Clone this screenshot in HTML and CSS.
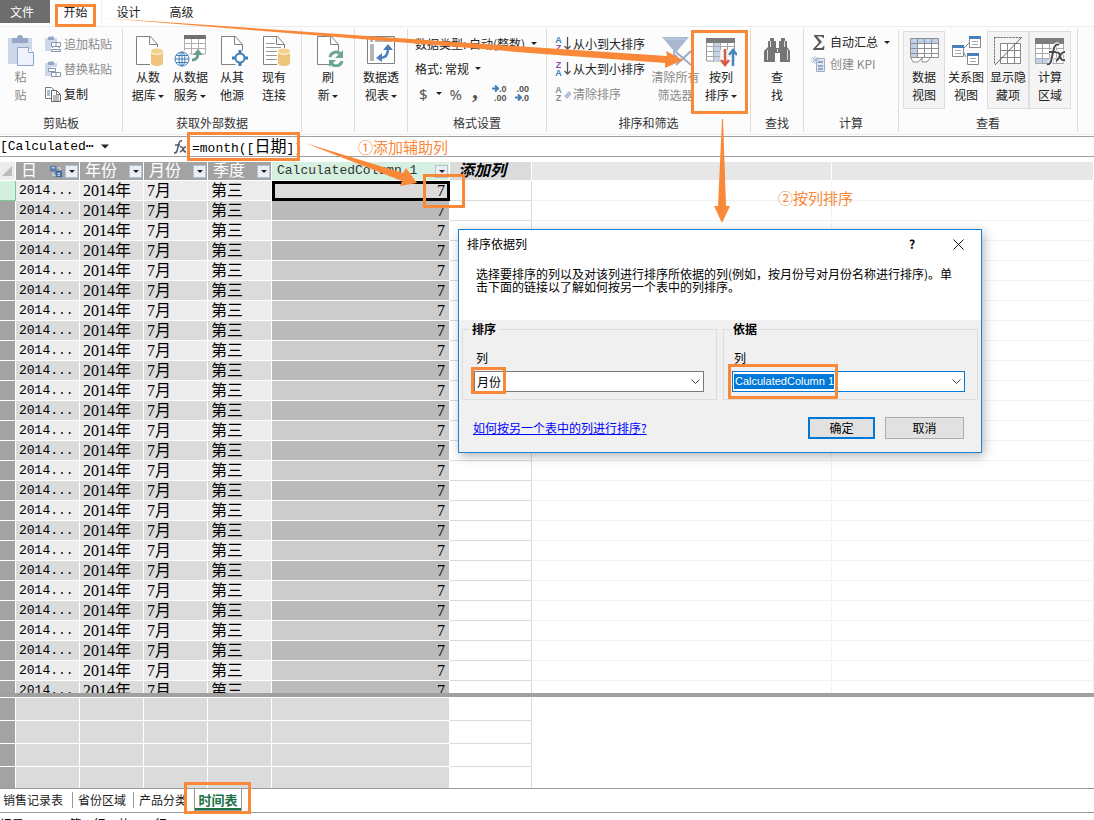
FILE: index.html
```html
<!DOCTYPE html>
<html lang="zh-CN">
<head>
<meta charset="utf-8">
<title>Power Pivot</title>
<link rel="stylesheet" href="styles.css">
</head>
<body>
<svg class="defs" aria-hidden="true">
  <defs>
    <symbol id="caret" viewBox="0 0 6 3"><path d="M0 0h6L3 3z" fill="#222"/></symbol>
    <symbol id="page" viewBox="0 0 32 32"><path d="M4.500 1.500h14l7 8v20h-21z" fill="#fff" stroke="#808080"/><path d="M17.500 1.500v8h8" fill="none" stroke="#808080"/></symbol>
    <symbol id="cyl" viewBox="0 0 12 18"><path d="M0 3v12c0 4 12 4 12 0V3z" fill="#eec57b"/><ellipse cx="6" cy="3" rx="6" ry="2.500" fill="#f4d18f"/><path d="M0 4c1 3 11 3 12 0" fill="none" stroke="#fff"/></symbol>
    <symbol id="sortarrow" viewBox="0 0 6 13"><path d="M3 0v12M0 9l3 3 3-3" fill="none" stroke="#555" stroke-width="1.300"/></symbol>
  </defs>
</svg>
<div class="app">
  <nav class="tabs">
    <button class="tab file">文件</button>
    <button class="tab active">开始</button>
    <button class="tab">设计</button>
    <button class="tab">高级</button>
  </nav>

  <div class="ribbon">
    <section class="group">
      <div class="tools">
        <button class="big paste off">
          <svg class="ico" viewBox="0 0 32 32"><path d="M3 3h24v26H3z" fill="#cdd7ea"/><path d="M7 3h5a3 3 0 016 0h5v5H7z" fill="#97a6c6"/><path d="M12.500 12.500h11l5 5v13h-16z" fill="#eef3fd" stroke="#8fa2c8"/><path d="M23.500 12.500v5h5" fill="#fff" stroke="#8fa2c8"/></svg>
          <span>粘<br>贴</span>
        </button>
        <div class="stack">
          <button class="small off"><svg viewBox="0 0 16 16"><path d="M0 2h4V0h5v2h3v4H6v9H0z" fill="#cdd7ea"/><path d="M3 1h6v3H3z" fill="#97a6c6"/><path d="M6.500 6.500h9v4h-9zM6.500 13.500h9v2h-9zM11 6v4" fill="#fff" stroke="#8794b0"/><path d="M7 12l2-2M15 12l-3-2" stroke="#8794b0"/></svg>追加粘贴</button>
          <button class="small off"><svg viewBox="0 0 16 16"><path d="M0 2h4V0h5v2h3v4H6v9H0z" fill="#cdd7ea"/><path d="M3 1h6v3H3z" fill="#97a6c6"/><path d="M3.500 7.500h7v3h-7zM6.500 11.500h9v4h-9zM11 11v4" fill="#fff" stroke="#8794b0"/></svg>替换粘贴</button>
          <button class="small"><svg viewBox="0 0 16 16"><path d="M.5 1.500h6l3 3v8h-9z" fill="#fff" stroke="#777"/><path d="M2 5h3M2 7h3M2 9h3" stroke="#5079a8"/><path d="M6.500 4.500h5l4 4v7h-9z" fill="#fff" stroke="#666"/><path d="M11.500 4.500v4h4M8 10h6M8 12h6M8 14h6" fill="none" stroke="#777"/></svg>复制</button>
        </div>
      </div>
      <h2>剪贴板</h2>
    </section>

    <section class="group">
      <div class="tools pad4">
        <button class="big">
          <svg class="ico" viewBox="0 0 32 32"><use href="#page" x="0" y="0" width="32" height="32"/><path d="M18 12h14v18H18z" fill="#fcfcfc"/><use href="#cyl" x="19" y="13" width="12" height="18"/></svg>
          <span>从数<br>据库 <svg class="caret"><use href="#caret"/></svg></span>
        </button>
        <button class="big">
          <svg class="ico" viewBox="0 0 32 32"><path d="M10.500 4v15h21V4M17.500 4v15M24.500 4v15M10 8.500h22M10 13.500h22" fill="#fff" stroke="#b0b0b0"/><path d="M10 0h22v4H10z" fill="#707070"/><circle cx="8" cy="24" r="9" fill="#fcfcfc"/><g fill="none" stroke="#3f7fba"><circle cx="8" cy="24" r="7"/><ellipse cx="8" cy="24" rx="3" ry="7"/><path d="M1 24h14M8 17v14M2 20.500h12M2 27.500h12"/></g><path d="M18 25q7 0 7-7" fill="none" stroke="#fff" stroke-width="5"/><path d="M18 25q6 0 6-7" fill="none" stroke="#6b9e8b" stroke-width="3"/><path d="M19 20l5-6 5 6z" fill="#6b9e8b"/></svg>
          <span>从数据<br>服务 <svg class="caret"><use href="#caret"/></svg></span>
        </button>
        <button class="big">
          <svg class="ico" viewBox="0 0 32 32"><use href="#page" width="32" height="32" x="1"/><circle cx="24" cy="23" r="8" fill="#fcfcfc"/><path d="M24 15v16M16 23h16" stroke="#3f7fba" stroke-width="3"/><circle cx="24" cy="23" r="4.500" fill="#fff" stroke="#3f7fba" stroke-width="2"/></svg>
          <span>从其<br>他源</span>
        </button>
        <button class="big">
          <svg class="ico" viewBox="0 0 32 32"><use href="#page" width="32" height="32" x="1"/><path d="M8 8.500h9M8 12.500h15M8 16.500h15M8 20.500h12M8 24.500h12" stroke="#999"/><path d="M19 13h13v18H19z" fill="#fcfcfc"/><use href="#cyl" x="20" y="13" width="12" height="18"/></svg>
          <span>现有<br>连接</span>
        </button>
      </div>
      <h2>获取外部数据</h2>
    </section>

    <section class="group">
      <div class="tools center">
        <button class="big">
          <svg class="ico" viewBox="0 0 32 32"><use href="#page" width="32" height="32" x="1"/><circle cx="24" cy="24" r="8" fill="#fcfcfc"/><path d="M18 22a6 6 0 0111-2M30 26a6 6 0 01-11 2" fill="none" stroke="#6fa68f" stroke-width="3"/><path d="M31 15v8h-8zM17 32v-7h7z" fill="#6fa68f"/></svg>
          <span>刷<br>新 <svg class="caret"><use href="#caret"/></svg></span>
        </button>
      </div>
    </section>

    <section class="group">
      <div class="tools center">
        <button class="big">
          <svg class="ico" viewBox="0 0 32 32"><path d="M2.500 1.500h27v27h-27z" fill="#fff" stroke="#808080"/><path d="M5 4h3v3H5zM10 4h17v3H10zM5 9h4v17H5z" fill="#b5b5b5"/><path d="M15 23q8 0 8-9" fill="none" stroke="#4a7fba" stroke-width="2.500"/><path d="M18 15l5-6 5 6zM17 18v9l-6-4z" fill="#4a7fba"/></svg>
          <span>数据透<br>视表 <svg class="caret"><use href="#caret"/></svg></span>
        </button>
      </div>
    </section>

    <section class="group">
      <div class="tools">
        <div class="stack format">
          <button class="small">数据类型: 自动(整数) <svg class="caret"><use href="#caret"/></svg></button>
          <button class="small">格式: 常规 <svg class="caret"><use href="#caret"/></svg></button>
          <div class="numfmt">
            <button>$</button><svg class="caret"><use href="#caret"/></svg><button>%</button><button class="comma">,</button>
            <button class="dec" aria-label="增加小数位数"><span><svg viewBox="0 0 7 7"><path d="M0 3.500h6M3 .5l3 3-3 3" fill="none" stroke="#3f7fba" stroke-width="2"/></svg>.0</span><span>.00</span></button>
            <button class="dec" aria-label="减少小数位数"><span>.00</span><span><svg viewBox="0 0 7 7"><path d="M0 3.500h6M3 .5l3 3-3 3" fill="none" stroke="#3f7fba" stroke-width="2"/></svg>.0</span></button>
          </div>
        </div>
      </div>
      <h2>格式设置</h2>
    </section>

    <section class="group">
      <div class="tools">
        <div class="stack sort">
          <button class="small"><span class="az"><b class="blue">A</b><b class="violet">Z</b></span><svg class="sarrow"><use href="#sortarrow"/></svg>从小到大排序</button>
          <button class="small"><span class="az"><b class="violet">Z</b><b class="blue">A</b></span><svg class="sarrow"><use href="#sortarrow"/></svg>从大到小排序</button>
          <button class="small off"><span class="az"><b>A</b><b>Z</b></span><svg class="sarrow" viewBox="0 0 7 13"><path d="M0 9l5-5 3 3-5 5z" fill="#b3c1d8"/></svg>清除排序</button>
        </div>
        <button class="big wide off">
          <svg class="ico" viewBox="0 0 32 32"><path d="M2 2h27L18 15v14l-5-3V15z" fill="#a9b8d0"/><path d="M5 4h21" stroke="#c3cfe2"/><path d="M16 17l15 13M31 15L16 30" stroke="#fcfcfc" stroke-width="4"/><path d="M16 17l15 13M31 16L16 30" stroke="#9aabc8" stroke-width="2"/></svg>
          <span>清除所有<br>筛选器</span>
        </button>
        <button class="big">
          <svg class="ico" viewBox="0 0 32 32"><path d="M1.500 4v22h28V4" fill="#fff" stroke="#999"/><path d="M8 7h8v19H8z" fill="#c3d4ea"/><path d="M1 11.500h28M1 16.500h28M1 21.500h28M8.500 7v19M15.500 7v19M22.500 7v19" stroke="#aaa"/><path d="M1 3h29v5H1z" fill="#7d7d7d"/><path d="M15 15h17v17H15z" fill="#fcfcfc" opacity=".8"/><path d="M20 14v15M16 25l4 5 4-5" fill="none" stroke="#d85c41" stroke-width="2.500"/><path d="M28 31V16M24 20l4-5 4 5" fill="none" stroke="#4a86be" stroke-width="2.500"/></svg>
          <span>按列<br>排序 <svg class="caret"><use href="#caret"/></svg></span>
        </button>
      </div>
      <h2>排序和筛选</h2>
    </section>

    <section class="group">
      <div class="tools center">
        <button class="big">
          <svg class="ico" viewBox="0 0 32 32"><path d="M9 3h4v3h2v7h3V6h2V3h4v3h2v6l3 4v11H19v-9h-5v9H3V16l4-4V6h2z" fill="#757575"/><path d="M9.500 6v6M23.500 6v6M6.500 15v10M26.500 15v10M16.500 14v3" stroke="#ddd"/></svg>
          <span>查<br>找</span>
        </button>
      </div>
      <h2>查找</h2>
    </section>

    <section class="group">
      <div class="tools">
        <div class="stack calc">
          <button class="small"><svg viewBox="0 0 16 16"><path d="M3 1h10v3h-1q0-1.500-2-1.500H6l5 5.500-6 6h5q2 0 2.500-2h1L13 16H2v-1l6-6.500L3 2z" fill="#555"/></svg>自动汇总 <svg class="caret"><use href="#caret"/></svg></button>
          <button class="small off"><svg viewBox="0 0 16 16"><path d="M5.500 2.500h8v13h-8z" fill="#dfe6f1" stroke="#9eacc4"/><path d="M7 5h5v2H7zM7 9h5v2H7zM7 12h5v2H7z" fill="#93a6c4"/><path d="M4 0v8M0 4h8M1 1l6 6M7 1L1 7" stroke="#b1c0d8"/></svg>创建 KPI</button>
        </div>
      </div>
      <h2>计算</h2>
    </section>

    <section class="group">
      <div class="tools pad4">
        <button class="big on">
          <svg class="ico" viewBox="0 0 32 32"><path d="M2.500 3.500h28v19h-28z" fill="#fff"/><path d="M2 3h28v5H9v14H2z" fill="#c0d2ea"/><path d="M2.500 3.500h28v19h-28zM2 8.500h28M2 13.500h28M2 18.500h28M9.500 3v19M16.500 3v19M23.500 3v19" fill="none" stroke="#8f8f8f"/><path d="M3 23l2 4h5l4-4v4h5l3-4" fill="#fff" stroke="#8f8f8f"/></svg>
          <span>数据<br>视图</span>
        </button>
        <button class="big">
          <svg class="ico" viewBox="0 0 32 32"><path d="M13 14l6-6M13 16l3 6" stroke="#888"/><path d="M2.500 11.500h11v10h-11zM19.500 2.500h11v10h-11zM17.500 19.500h11v10h-11z" fill="#fff" stroke="#888"/><path d="M2 10h12v3H2zM19 1h12v3H19zM17 18h12v3H17z" fill="#4a80b8"/><path d="M5 15.500h6M5 18.500h6M22 6.500h6M22 9.500h6M20 23.500h6M20 26.500h6" stroke="#aaa"/></svg>
          <span>关系图<br>视图</span>
        </button>
        <button class="big on">
          <svg class="ico" viewBox="0 0 32 32"><path d="M8.500 8.500h20v20h-20zM8 15.500h20M8 22.500h20M15.500 8v20M22.500 8v20" fill="#fff" stroke="#888"/><path d="M2.500 2.500h27M2.500 2.500v26" stroke="#666" stroke-dasharray="2 1"/><path d="M3 30L30 2" stroke="#666"/></svg>
          <span>显示隐<br>藏项</span>
        </button>
        <button class="big on">
          <svg class="ico" viewBox="0 0 32 32"><path d="M1.500 4.500h28v24h-28z" fill="#fff"/><path d="M2 24h18v5H2z" fill="#c0d2ea"/><path d="M1.500 4.500v24h28v-24M1 13.500h28M1 18.500h28M1 23.500h28M8.500 9v19M15.500 9v19M22.500 9v19" fill="none" stroke="#aaa"/><path d="M1 3h29v6H1z" fill="#7d7d7d"/><path d="M24 10q-2-2-4 3l-3 13q-1 4-4 3M15 17h7M22 18q3-2 4 3t5 4M31 17q-3 0-5 4t-4 5" fill="none" stroke="#fff" stroke-width="4"/><path d="M25 10q-3-2-5 3l-3 13q-1 4-4 3M15 17h7M22 18q3-2 4 3t5 4M31 17q-3 0-5 4t-4 5" fill="none" stroke="#4a4a4a" stroke-width="2"/></svg>
          <span>计算<br>区域</span>
        </button>
      </div>
      <h2>查看</h2>
    </section>
  </div>

  <div class="formula">
    <button class="namebox">[Calculated⋯ <svg class="caret"><use href="#caret"/></svg></button>
    <svg class="fx" viewBox="0 0 14 14"><path d="M8 1q-2-1-3 2L3 11q-.5 2-3 2M1 5h5" fill="none" stroke="#4c596b" stroke-width="1.500"/><path d="M6 7q2-1 3 2t3 3M12 7q-2 0-3 2t-3 3" fill="none" stroke="#4c596b" stroke-width="1.500"/></svg>
    <div class="expr" contenteditable="true">=month([<span>日期</span>])</div>
  </div>

  <div class="sheet">
    <table class="grid">
      <colgroup><col class="c-row"><col class="c-std"><col class="c-std"><col class="c-std"><col class="c-std"><col class="c-calc"><col class="c-add"><col class="c-pad"><col></colgroup>
      <thead>
        <tr>
          <th class="corner"><svg viewBox="0 0 12 12"><path d="M12 0v12H0z" fill="#bbb"/></svg></th>
          <th><div class="head">日<svg class="rel" viewBox="0 0 14 14"><path d="M0 1h7v6H0z" fill="#5b7fae"/><path d="M6 6h7v7H6z" fill="#3e689e"/><path d="M2 3h3M8 9h3M8 11h3" stroke="#fff"/><path d="M8 3h3v3M3 8v3h3" fill="none" stroke="#dfe8f3"/></svg><button class="filter" aria-label="筛选"><svg class="caret"><use href="#caret"/></svg></button></div></th>
          <th><div class="head">年份<button class="filter" aria-label="筛选"><svg class="caret"><use href="#caret"/></svg></button></div></th>
          <th><div class="head">月份<button class="filter" aria-label="筛选"><svg class="caret"><use href="#caret"/></svg></button></div></th>
          <th><div class="head">季度<button class="filter" aria-label="筛选"><svg class="caret"><use href="#caret"/></svg></button></div></th>
          <th class="calc-head"><div class="head">CalculatedColumn 1<button class="filter" aria-label="筛选"><svg class="caret"><use href="#caret"/></svg></button></div></th>
          <th class="add">添加列</th>
          <th class="blank"></th>
          <th class="blank"></th>
        </tr>
      </thead>
      <tbody id="rows"></tbody>
    </table>
  </div>

  <div class="measures">
    <table class="grid">
      <colgroup><col class="c-row"><col class="c-std"><col class="c-std"><col class="c-std"><col class="c-std"><col class="c-calc"><col class="c-add"><col></colgroup>
      <tbody id="measure-rows"></tbody>
    </table>
  </div>

  <nav class="sheets">
    <button>销售记录表</button>
    <button>省份区域</button>
    <button>产品分类</button>
    <button class="current">时间表</button>
  </nav>
  <footer class="status"><span>记录:</span><span>第 1 行，共 730 行</span></footer>

  <div class="dialog" role="dialog" aria-label="排序依据列">
    <div class="dlg-top">
      <div class="dlg-title">排序依据列<span class="dlg-ctl"><button>?</button><button aria-label="关闭"><svg viewBox="0 0 11 11"><path d="M.5.5l10 10M10.500.5l-10 10" stroke="#111"/></svg></button></span></div>
      <p>选择要排序的列以及对该列进行排序所依据的列(例如，按月份号对月份名称进行排序)。单<br>击下面的链接以了解如何按另一个表中的列排序。</p>
    </div>
    <div class="dlg-fields">
      <fieldset>
        <legend>排序</legend>
        <label for="sort-col">列</label>
        <div class="combo"><select id="sort-col"><option>月份</option></select><svg viewBox="0 0 9 5"><path d="M.5.5l4 4 4-4" fill="none" stroke="#444"/></svg></div>
      </fieldset>
      <fieldset class="by">
        <legend>依据</legend>
        <label for="by-col">列</label>
        <div class="combo focus"><select id="by-col"><option>CalculatedColumn 1</option></select><svg viewBox="0 0 9 5"><path d="M.5.5l4 4 4-4" fill="none" stroke="#444"/></svg></div>
      </fieldset>
    </div>
    <div class="dlg-foot">
      <a href="#">如何按另一个表中的列进行排序?</a>
      <button class="ok">确定</button>
      <button class="cancel">取消</button>
    </div>
  </div>

  <svg class="marks" viewBox="0 0 1094 820" aria-hidden="true">
    <g fill="none" stroke="#f98838" stroke-width="3">
      <rect x="56.500" y="5.500" width="38" height="20"/>
      <rect x="188.500" y="133.500" width="110" height="26"/>
      <rect x="424.500" y="175.500" width="39" height="31"/>
      <rect x="692.500" y="31.500" width="54" height="81"/>
      <rect x="472.500" y="368.500" width="32" height="24"/>
      <rect x="729.500" y="365.500" width="107" height="32"/>
      <rect x="185.500" y="783.500" width="64" height="29"/>
    </g>
    <g fill="#f98838">
      <path d="M104 18L530 47l137 9-1-5 17 9-18 8v-5L530 53z"/>
      <path d="M305 143l98 30 3-5 11 15-17 3 2-5z"/>
      <path d="M722 119h1l3 87h4l-8 17-8-17h4z"/>
    </g>
  </svg>
  <div class="note one">①添加辅助列</div>
  <div class="note two">②按列排序</div>
</div>
<script src="app.js"></script>
</body>
</html>
```
FILE: styles.css
```css
* { box-sizing: border-box; }
body { margin: 0; font: 12px/18px "Noto Sans CJK SC", "Liberation Sans", sans-serif; color: #222; background: #fff; }
button { font: inherit; color: inherit; background: none; border: 0; padding: 0; margin: 0; }
.defs { position: absolute; width: 0; height: 0; }
.app { position: relative; height: 100vh; overflow: hidden; display: flex; flex-direction: column; }
.caret { width: 6px; height: 3px; vertical-align: middle; flex: none; }

/* Ribbon tabs */
.tabs { display: flex; height: 27px; border-bottom: 1px solid #eee; flex: none; }
.tab { width: 53px; height: 26px; padding-bottom: 2px; }
.tab.file { width: 50px; height: 23px; padding: 0 6px 0 0; background: #6d6d6d; color: #fff; }
.tab.active { width: 52px; border-right: 1px solid #eee; }

/* Ribbon */
.ribbon { display: grid; grid-template-columns: 123px 179px 53px 53px 139px 204px 53px 95px 179px; height: 108px; padding: 2px 0; background: #fcfcfc; border-bottom: 1px solid #eee; flex: none; }
.group { display: flex; flex-direction: column; border-right: 1px solid #ddd; min-width: 0; }
.group h2 { margin: 0; font-size: 12px; font-weight: 400; line-height: 18px; text-align: center; color: #333; }
.tools { flex: 1; display: flex; align-items: flex-start; }
.tools.pad4 { padding-left: 4px; }
.tools.center { justify-content: center; }
.big { width: 42px; height: 78px; margin-top: 2px; padding-top: 3px; display: flex; flex-direction: column; align-items: center; gap: 1px; flex: none; white-space: nowrap; border: 1px solid transparent; }
.big span { line-height: 18px; }
.big.paste { width: 41px; }
.big.wide { width: 49px; }
.big.on { background: #f4f4f4; border-color: #ddd; }
.ico { width: 32px; height: 32px; flex: none; }
.off { color: #8a8a8a; }
.stack { display: flex; flex-direction: column; padding: 2px 0 0 4px; }
.small { display: flex; align-items: center; gap: 3px; height: 25px; white-space: nowrap; }
.small > svg:not(.caret):not(.sarrow) { width: 16px; height: 16px; }
.small .caret { margin-left: 3px; }
.stack.format { padding-left: 7px; }
.numfmt { display: flex; align-items: center; gap: 8px; height: 25px; font: 15px/20px "Noto Sans", sans-serif; color: #555; padding-left: 4px; }
.numfmt .comma { font: bold 24px/16px "Liberation Serif", serif; padding: 0 6px 8px 2px; }
.numfmt .dec { font: bold 9px/9px "Liberation Sans", sans-serif; text-align: right; }
.dec span { display: block; white-space: nowrap; }
.dec svg { width: 7px; height: 7px; }
.stack.sort { width: 104px; padding-left: 8px; }
.az { display: flex; flex-direction: column; width: 7px; font: 9px/8px "Liberation Sans", sans-serif; }
.az b { font-weight: 700; }
.sarrow { width: 7px; height: 13px; }
.sort .small { gap: 2px; }
.blue { color: #3f7fba; }
.violet { color: #8a52a8; }
.stack.calc { padding: 2px 0 0 7px; }
.calc .small { height: 22px; }

/* Formula bar */
.formula { display: flex; align-items: center; height: 21px; margin: 1px 0 5px; border: solid #a0a0a0; border-width: 1px 0; flex: none; font: 13px/18px "Liberation Mono", monospace; color: #000; }
.namebox { width: 174px; text-align: left; }
.namebox .caret { width: 8px; height: 5px; }
.fx { width: 14px; height: 14px; }
.expr { padding-left: 4px; flex: 1; }
.expr span { font: 16px/18px "Noto Sans CJK SC", sans-serif; }

/* Data grid */
.sheet { flex: 1; min-height: 0; overflow: hidden; }
.grid { width: 100%; table-layout: fixed; border-collapse: separate; border-spacing: 0; color: #000; font: 16px/19px "Liberation Serif", "Noto Sans CJK SC", serif; }
.c-row { width: 16px; }
.c-std { width: 64px; }
.c-calc { width: 178px; }
.c-add { width: 82px; }
.c-pad { width: 300px; }
.grid th, .grid td { padding: 0 3px; height: 20px; border: solid #fff; border-width: 0 1px 1px 0; text-align: left; font-weight: 400; white-space: nowrap; overflow: hidden; line-height: 19px; }
.grid th { height: 19px; line-height: 18px; background: #a3a3a3; color: #fff; padding: 0 1px 0 5px; }
.grid .corner { background: #ececec; padding: 0 2px; }
.corner svg { width: 10px; height: 10px; display: block; }
.head { display: flex; align-items: center; height: 18px; gap: 2px; }
.filter { margin-left: auto; width: 13px; height: 13px; background: #e9eef6; border: 1px solid #b5c0d0; display: flex; align-items: center; justify-content: center; flex: none; }
.rel { width: 13px; height: 13px; margin-left: auto; }
.rel + .filter { margin-left: 0; }
.grid .calc-head { background: #d5f0e0; color: #333; font: 13px/18px "Liberation Mono", monospace; }
.grid .add { background: #dbdbdb; color: #000; font-weight: 700; font-style: italic; padding-left: 8px; }
.grid .blank { background: #e7e7e7; }
tbody .light td { background: #ececec; }
tbody .dark td { background: #dbdbdb; }
.grid .mono { font: 13px/19px "Liberation Mono", monospace; }
.grid tbody .rownum { background: #a3a3a3; }
.grid tbody .calc { text-align: right; padding-right: 4px; border-color: #fff; background: #bbb; }
.grid tbody .light .calc { background: #ccc; }
.grid tbody .new { background: #fff; border-color: #dbdbdb; }
.grid tbody .rest { background: #fff; border-color: #f2f2f2; }
.grid tbody .first .rownum { background: #d5f0e0; border-color: #7cc69c; }
.grid tbody .first .calc { background: #dbdbdb; outline: 3px solid #000; outline-offset: -3px; }

.measures { border-top: 4px solid #a0a0a0; padding-top: 1px; height: 95px; overflow: hidden; flex: none; }
.measures .grid td { height: 23px; background: #dbdbdb; }
.measures .grid tbody .rownum { background: #a3a3a3; }
.measures .grid tbody .new { background: #fff; }
.measures .grid tbody .rest { background: #fff; border-color: #fff; }

/* Sheet tabs */
.sheets { display: flex; height: 25px; border: solid #999; border-width: 1px 0; flex: none; align-items: flex-start; }
.sheets button { height: 22px; padding: 0 0 0 5px; width: 61px; white-space: nowrap; text-align: left; background: linear-gradient(#999, #999) right center / 1px 16px no-repeat; }
.sheets button:first-child { width: 73px; padding-left: 3px; }
.sheets button:nth-child(3) { background: none; width: 60px; }
.sheets .current { width: 48px; padding: 0; text-align: center; color: #1e7145; font-weight: 700; font-size: 13px; background: #fff; border: solid #999; border-width: 0 1px 1px; box-shadow: inset 0 -2px #1e7145; }
.status { height: 7px; flex: none; display: flex; gap: 42px; padding: 2px 0 0 0; overflow: hidden; color: #000; }

/* Dialog */
.dialog { position: absolute; left: 458px; top: 229px; width: 524px; height: 224px; border: 1px solid #1883d7; background: #f0f0f0; box-shadow: 2px 3px 10px rgba(0,0,0,.3); color: #000; display: flex; flex-direction: column; }
.dlg-top { background: #fff; height: 90px; }
.dlg-title { display: flex; height: 28px; line-height: 28px; padding-left: 8px; }
.dlg-ctl { margin-left: auto; display: flex; }
.dlg-ctl button { width: 46px; display: flex; align-items: center; justify-content: center; font-weight: 700; }
.dlg-ctl svg { width: 11px; height: 11px; }
.dlg-top p { margin: 9px 0 0 17px; line-height: 13px; white-space: nowrap; }
.dlg-fields { display: grid; grid-template-columns: 1fr 1fr; gap: 6px; padding: 0 3px; }
fieldset { margin: 0; border: 1px solid #dcdcdc; padding: 11px 12px 5px 11px; height: 80px; min-width: 0; }
fieldset.by { padding-left: 8px; }
legend { font-weight: 700; line-height: 18px; padding: 0 2px; margin-left: -4px; }
.by legend { margin-left: -1px; }
fieldset label { display: block; line-height: 18px; height: 22px; padding-left: 2px; }
.combo { position: relative; height: 21px; }
.combo select { appearance: none; display: block; width: 100%; height: 21px; font: 12px/19px "Noto Sans CJK SC", sans-serif; border: 1px solid #7a7a7a; border-radius: 0; padding: 0 0 0 2px; background: #fff; color: #000; }
.combo.focus select { font: 11px/19px "Liberation Sans", sans-serif; border-color: #0078d7; color: #fff; background: linear-gradient(#0078d7, #0078d7) 1px 2px / 100px 15px no-repeat #fff; }
.combo svg { position: absolute; right: 4px; top: 8px; width: 9px; height: 5px; }
.dlg-foot { display: flex; align-items: center; gap: 10px; padding: 17px 17px 0 14px; }
.dlg-foot a { color: #00f; margin-right: auto; }
.dlg-foot button { height: 22px; width: 79px; background: #e1e1e1; border: 1px solid #adadad; line-height: 18px; }
.dlg-foot .ok { width: 67px; border: 2px solid #0078d7; }

/* Annotations */
.marks { position: absolute; left: 0; top: 0; width: 1094px; height: 820px; pointer-events: none; }
.note { position: absolute; color: #f98838; font-size: 15px; line-height: 20px; }
.note.one { left: 358px; top: 137px; }
.note.two { left: 778px; top: 188px; }
```
FILE: app.js
```js
const body = document.getElementById("rows");
for (let i = 0; i < 26; i++) {
  const row = body.insertRow();
  row.className = (i % 2 ? "dark" : "light") + (i === 0 ? " first" : "");
  row.innerHTML = '<td class="rownum"></td><td class="mono">2014...</td><td>2014年</td><td>7月</td><td>第三</td>' +
    '<td class="calc">7</td><td class="new"></td><td class="rest"></td><td class="rest"></td>';
}

const measures = document.getElementById("measure-rows");
for (let i = 0; i < 4; i++) {
  measures.insertRow().innerHTML = '<td class="rownum"></td><td></td><td></td><td></td><td></td><td></td><td class="new"></td><td class="rest"></td>';
}
```
